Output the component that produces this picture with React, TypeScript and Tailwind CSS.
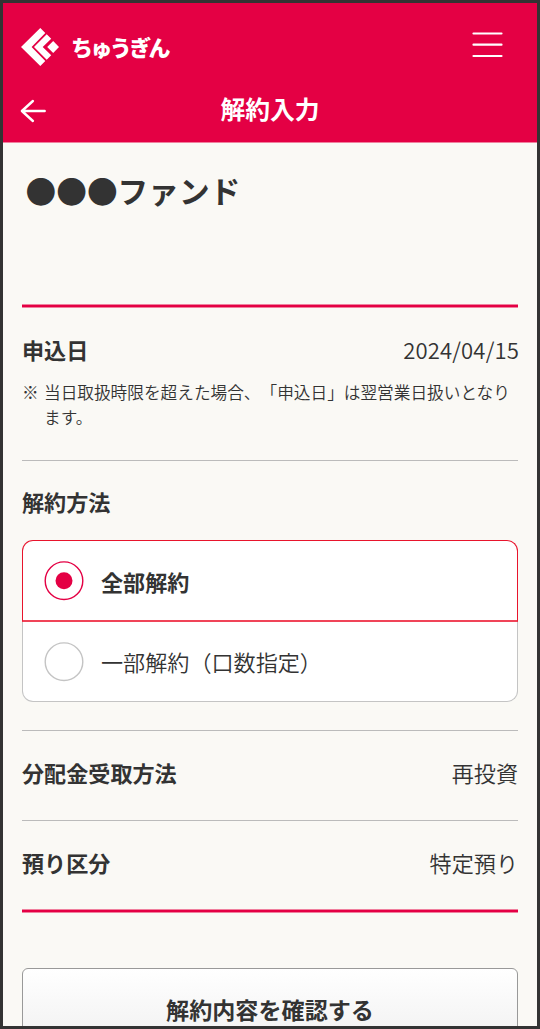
import { useState } from 'react';
import type { ReactNode } from 'react';

const methods = [
  { id: 'all', label: '全部解約' },
  { id: 'part', label: '一部解約（口数指定）' },
];

function Logo() {
  return (
    <div className="flex items-center">
      <svg width="38" height="38" viewBox="0 0 38 38" fill="#fff">
        <path d="M19.3 0 L24.3 5 L10.6 19 L24.3 33 L19.3 38 L0 19 Z" />
        <path d="M25.7 6.3 L30.2 10.8 L21.7 19 L30.2 27.2 L25.7 31.7 L13 19 Z" />
        <path d="M32.2 13 L38 19 L32.2 25 L26.2 19 Z" />
      </svg>
      <span className="-mt-[3px] ml-[12px] text-[22px] leading-[30px] font-black tracking-[-2.6px] text-white">ちゅうぎん</span>
    </div>
  );
}

function Row({ label, value, note }: { label: string; value: ReactNode; note?: ReactNode }) {
  return (
    <div>
      <div className="flex h-8 items-center justify-between leading-8">
        <dt className="font-bold">{label}</dt>
        <dd className="font-[350]">{value}</dd>
      </div>
      {note}
    </div>
  );
}

function RedLine() {
  return <div className="h-1 border-y border-[#f0809e] bg-[#e40044]" />;
}

export default function App() {
  const [selected, setSelected] = useState('all');

  return (
    <div className="flex h-[1029px] w-[540px] flex-col overflow-hidden border-3 border-[#333333] bg-[#faf9f5] font-['Noto_Sans_CJK_JP',sans-serif] text-[22.1px] text-[#333333] [text-spacing-trim:space-all]">
      <header className="flex h-[140px] shrink-0 flex-col border-b border-[#f0809e] bg-[#e40044] text-white">
        <div className="flex h-[88px] items-center justify-between pr-[34px] pl-[18px]">
          <Logo />
          <button aria-label="メニュー" className="-mt-[5px]">
            <svg width="31" height="27" viewBox="0 0 31 27" stroke="#fff" strokeWidth="2.2" strokeLinecap="round">
              <path d="M1.5 2.5 H29.5 M1.5 13.7 H29.5 M1.5 25 H29.5" />
            </svg>
          </button>
        </div>
        <div className="grid h-[39px] grid-cols-[60px_1fr_60px] items-center">
          <button aria-label="戻る" className="pl-[17px]">
            <svg width="27" height="24" viewBox="0 0 27 24" fill="none" stroke="#fff" strokeWidth="2.4" strokeLinecap="round" strokeLinejoin="round">
              <path d="M12.9 2 L1.9 12 L12.9 22 M1.9 12 H24.7" />
            </svg>
          </button>
          <h1 className="-mt-[5px] text-center text-[24.8px] leading-[36px] font-bold">解約入力</h1>
        </div>
      </header>

      <main className="px-[19px]">
        <h2 className="mt-[25px] pl-[3.5px] text-[30.7px] leading-[44px] font-bold">●●●ファンド</h2>
        <div className="mt-[92px]">
          <RedLine />
        </div>

        <dl>
          <div className="border-b border-[#bbbbbb] pt-[25px] pb-[30px]">
            <Row
              label="申込日"
              value={<span className="-mr-px tracking-[0.15px]">2024/04/15</span>}
              note={
                <p className="mt-[15px] flex text-[16.66px] leading-[25px] font-[350]">
                  <span className="w-[22px] shrink-0">※</span>
                  <span className="w-[470px]">当日取扱時限を超えた場合、「申込日」は翌営業日扱いとなります。</span>
                </p>
              }
            />
          </div>

          <div className="border-b border-[#bbbbbb] pt-[24px] pb-[28px]">
            <dt className="leading-8 font-bold">解約方法</dt>
            <dd className="mt-[23px] rounded-[11px] bg-white" role="radiogroup">
              {methods.map((m, i) => (
                <button
                  key={m.id}
                  role="radio"
                  aria-checked={selected === m.id}
                  onClick={() => setSelected(m.id)}
                  className={`flex w-full items-center border pl-[20.5px] text-left ${i === 0 ? 'h-[82px] rounded-t-[11px] border-b-2' : 'h-[80px] rounded-b-[11px] border-t-0'} ${
                    selected === m.id ? 'border-[#e8142c] border-b-[#f04458] font-bold' : 'border-[#c4c4c4] font-[350]'
                  }`}
                >
                  <svg width="40" height="40" viewBox="0 0 40 40" fill="none">
                    <circle cx="20" cy="19.7" r="18.8" stroke={selected === m.id ? '#e40044' : '#c4c4c4'} strokeWidth="1.4" />
                    {selected === m.id && <circle cx="20" cy="19.7" r="8.5" fill="#e40044" />}
                  </svg>
                  <span className={`ml-[17.5px] ${i === 0 ? 'mt-[2px]' : ''}`}>{m.label}</span>
                </button>
              ))}
            </dd>
          </div>

          <div className="border-b border-[#bbbbbb] pt-[25px] pb-[32px]">
            <Row label="分配金受取方法" value="再投資" />
          </div>
          <div className="pt-[25px] pb-[31px]">
            <Row label="預り区分" value="特定預り" />
          </div>
        </dl>
        <RedLine />

        <button className="mt-[55px] h-[82px] w-full rounded-[6px] border border-[#999999] bg-linear-to-b from-white to-[#f0f0f0] text-[23.1px] font-bold">
          解約内容を確認する
        </button>
      </main>
    </div>
  );
}
